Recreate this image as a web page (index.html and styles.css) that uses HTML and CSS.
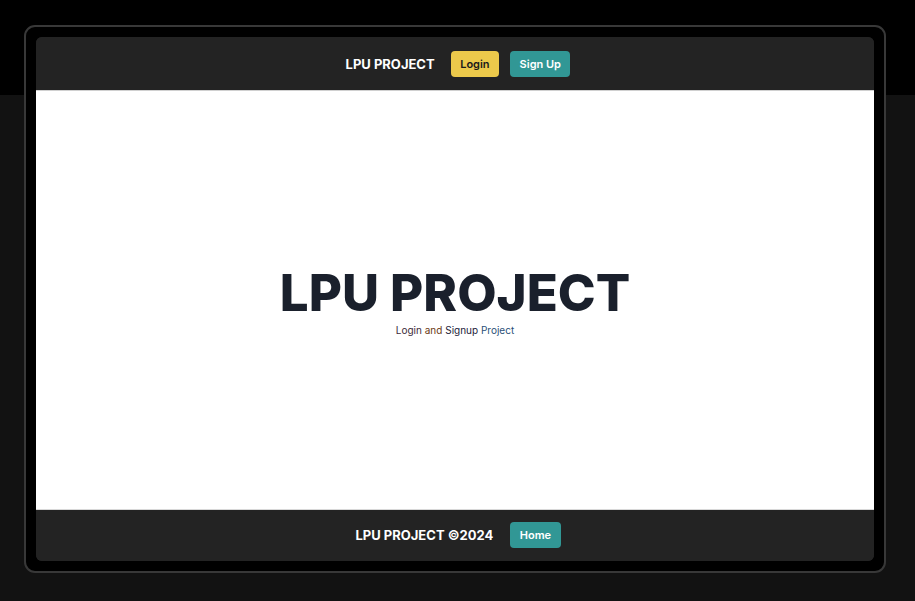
FILE: index.html
```html
<!DOCTYPE html>
<html>
<head>
<meta charset="utf-8">
<link rel="stylesheet" href="styles.css">
</head>
<body>
<div class="frame">
  <div class="screen">
    <header class="topbar">
      <span class="brand">LPU PROJECT</span>
      <div class="actions">
        <button class="btn btn-login">Login</button>
        <button class="btn btn-teal">Sign Up</button>
      </div>
    </header>
    <main class="hero">
      <h1 class="title">LPU PROJECT</h1>
      <p class="subtitle"><span class="c1">Login</span> <span class="c2">and</span> <span class="c3">Signup</span> <span class="c4">Project</span></p>
    </main>
    <footer class="bottombar">
      <span class="brand">LPU PROJECT ©2024</span>
      <button class="btn btn-teal">Home</button>
    </footer>
  </div>
</div>
</body>
</html>
```
FILE: styles.css
```css
* { box-sizing: border-box; }
html, body { height: 100%; }
body {
  margin: 0;
  background: linear-gradient(to bottom, #000 0, #000 95px, #121212 95px, #121212 100%);
  font-family: Inter, "Noto Sans", sans-serif;
  padding: 25px 0 0 24px;
}
.frame {
  width: 862px;
  height: 548px;
  border: 2px solid #383838;
  border-radius: 11px;
  background: #000;
  padding: 10px;
}
.screen {
  height: 100%;
  border-radius: 6px;
  overflow: hidden;
  display: flex;
  flex-direction: column;
  background: #232323;
}
.topbar {
  height: 54px;
  display: flex;
  align-items: center;
  justify-content: center;
  gap: 16px;
  padding-left: 6px;
  background: #232323;
  border-bottom: 1px solid #d0d0d0;
}
.actions { display: flex; gap: 11px; }
.brand {
  color: #fff;
  font-weight: 700;
  font-size: 13px;
}
.btn {
  font-family: Inter, "Noto Sans", sans-serif;
  font-weight: 600;
  font-size: 11px;
  border: none;
  border-radius: 4px;
  height: 26px;
  padding: 0 9.5px;
}
.btn-login { background: #ecc94b; color: #1a1a1a; }
.btn-teal { background: #319795; color: #fff; }
.hero {
  flex: 1;
  background: #fff;
  display: flex;
  flex-direction: column;
  align-items: center;
  justify-content: center;
  padding-bottom: 2px;
}
.title {
  margin: 0;
  font-size: 51px;
  font-weight: 800;
  color: #1a202c;
  line-height: 1.2;
}
.subtitle {
  margin: 0;
  font-size: 10px;
  line-height: 1.2;
}
.c1 { color: #3d2b3a; }
.c2 { color: #6b3a12; }
.c3 { color: #22223a; }
.c4 { color: #2a4f78; }
.bottombar {
  height: 52px;
  display: flex;
  align-items: center;
  justify-content: center;
  gap: 17px;
  padding-left: 6px;
  padding-bottom: 2px;
  background: #232323;
  border-top: 1px solid #d8d8d8;
}
```
